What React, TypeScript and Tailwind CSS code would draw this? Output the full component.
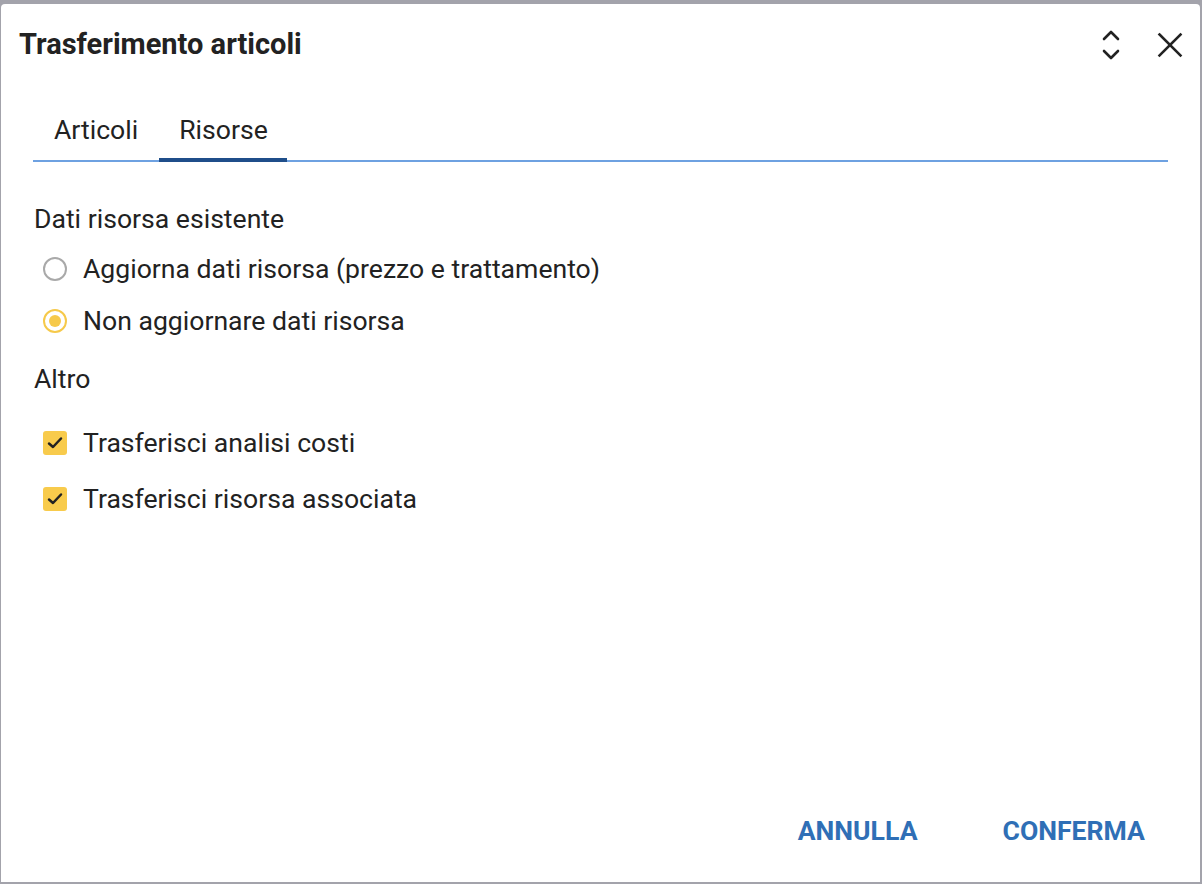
import { useState } from 'react'

function SortIcon() {
  return (
    <svg width="20" height="32" viewBox="0 0 20 32" fill="none" stroke="#222" strokeWidth="2.6" strokeLinecap="round" strokeLinejoin="round">
      <path d="M3 10 L10 3 L17 10" />
      <path d="M3 22 L10 29 L17 22" />
    </svg>
  )
}

function CloseIcon() {
  return (
    <svg width="26" height="26" viewBox="0 0 26 26" fill="none" stroke="#222" strokeWidth="2.6" strokeLinecap="square">
      <path d="M2.5 2.5 L23.5 23.5" />
      <path d="M23.5 2.5 L2.5 23.5" />
    </svg>
  )
}

function Radio({ checked, label, onClick }: { checked: boolean; label: string; onClick: () => void }) {
  return (
    <button onClick={onClick} className="flex items-center h-[52px] pl-[9px] text-left">
      <span
        className={
          checked
            ? 'w-[24px] h-[24px] rounded-full border-[2.5px] border-[#f6c94a] flex items-center justify-center'
            : 'w-[24px] h-[24px] rounded-full border-[2.5px] border-[#a9a9a9] flex items-center justify-center'
        }
      >
        {checked && <span className="w-[12px] h-[12px] rounded-full bg-[#f6c94a]" />}
      </span>
      <span className="ml-[16px] text-[26.6px] leading-[32px] text-[#222]">{label}</span>
    </button>
  )
}

function Check({ checked, label, onClick }: { checked: boolean; label: string; onClick: () => void }) {
  return (
    <button onClick={onClick} className="flex items-center h-[56px] pl-[9px] text-left">
      <span className="w-[24px] h-[24px] rounded-[3px] bg-[#f8cb4c] flex items-center justify-center">
        {checked && (
          <svg width="18" height="18" viewBox="0 0 18 18" fill="none" stroke="#222" strokeWidth="2.5" strokeLinecap="round" strokeLinejoin="round">
            <path d="M3 9.5 L7 13 L15 4.5" />
          </svg>
        )}
      </span>
      <span className="ml-[16px] text-[26.6px] leading-[32px] text-[#222]">{label}</span>
    </button>
  )
}

export default function App() {
  const [tab, setTab] = useState('risorse')
  const [update, setUpdate] = useState(false)
  const [costs, setCosts] = useState(true)
  const [linked, setLinked] = useState(true)

  return (
    <div className="w-[1202px] h-[884px] bg-[#a3a3ab] pt-[4px] pl-[1px] pr-[2px] pb-[2px] font-['Roboto',sans-serif]">
      <div className="w-full h-full bg-white rounded-tl-[4px] rounded-tr-[4px] flex flex-col">
        {/* Header */}
        <div className="flex items-center h-[80px] pl-[18px] pr-[17px]">
          <h2 className="text-[29px] leading-[36px] font-bold text-[#222] flex-1">Trasferimento articoli</h2>
          <button className="mr-[36px] mt-[2px]"><SortIcon /></button>
          <button className="mt-[2px]"><CloseIcon /></button>
        </div>

        {/* Tabs */}
        <div className="mx-[32px] border-b-[2px] border-[#6ea1e1] flex h-[78px] items-end">
          <button
            onClick={() => setTab('articoli')}
            className="relative h-[54px] px-[21px] text-[26.6px] leading-[32px] text-[#222] pb-[6px] flex items-center"
          >
            Articoli
            {tab === 'articoli' && <span className="absolute left-0 right-0 bottom-[-2px] h-[4px] bg-[#1f4e8a]" />}
          </button>
          <button
            onClick={() => setTab('risorse')}
            className="relative h-[54px] pl-[20px] pr-[19px] text-[26.6px] leading-[32px] text-[#222] pb-[6px] flex items-center"
          >
            Risorse
            {tab === 'risorse' && <span className="absolute left-0 right-0 bottom-[-2px] h-[4px] bg-[#1f4e8a]" />}
          </button>
        </div>

        {/* Content */}
        <div className="flex-1 px-[33px] pt-[41px] flex flex-col">
          <div className="text-[26.6px] text-[#222] leading-[32px]">Dati risorsa esistente</div>
          <div className="flex flex-col mt-[8px]">
            <Radio checked={update} label="Aggiorna dati risorsa (prezzo e trattamento)" onClick={() => setUpdate(true)} />
            <Radio checked={!update} label="Non aggiornare dati risorsa" onClick={() => setUpdate(false)} />
          </div>
          <div className="text-[26.6px] text-[#222] leading-[32px] mt-[16px]">Altro</div>
          <div className="flex flex-col mt-[20px]">
            <Check checked={costs} label="Trasferisci analisi costi" onClick={() => setCosts(!costs)} />
            <Check checked={linked} label="Trasferisci risorsa associata" onClick={() => setLinked(!linked)} />
          </div>
        </div>

        {/* Footer */}
        <div className="flex justify-end items-center h-[100px] pb-[2px] pr-[55px] gap-[85px]">
          <button className="text-[26.6px] leading-[32px] font-bold text-[#2f6fb6]">ANNULLA</button>
          <button className="text-[26.6px] leading-[32px] font-bold text-[#2f6fb6]">CONFERMA</button>
        </div>
      </div>
    </div>
  )
}
